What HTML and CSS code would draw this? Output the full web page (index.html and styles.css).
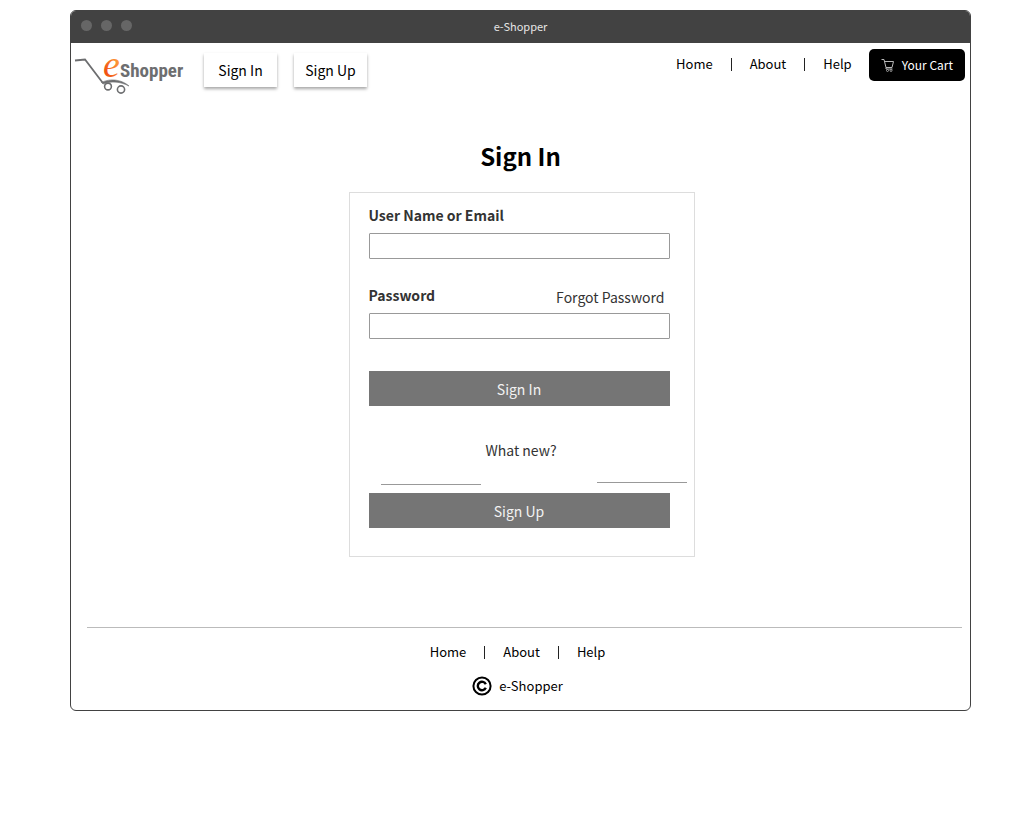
FILE: index.html
```html
<!DOCTYPE html>
<html lang="en">
<head>
<meta charset="utf-8">
<title>e-Shopper</title>
<link rel="stylesheet" href="styles.css">
</head>
<body>
<div class="window">
  <div class="titlebar">
    <div class="dots"><span class="dot"></span><span class="dot"></span><span class="dot"></span></div>
    <span class="titlebar-name">e-Shopper</span>
  </div>
  <header class="header">
    <svg class="logo" viewBox="0 -9 112 53" role="img" aria-label="eShopper">
      <defs>
        <linearGradient id="flame" x1="0" y1="1" x2="1" y2="0">
          <stop offset="0.2" stop-color="#f04e12"/>
          <stop offset="0.8" stop-color="#ffa340"/>
        </linearGradient>
      </defs>
      <path d="M1 8.500 11 7.500 28.500 30.500" fill="none" stroke="#6d6e70" stroke-width="1.800"/>
      <path d="M27.500 30.500C36 26 48 27.500 55 34 46 29.500 38 29 29 32Z" fill="#6d6e70" stroke="#6d6e70" stroke-width=".6"/>
      <circle cx="34" cy="34.500" r="3.400" fill="#fff" stroke="#6d6e70" stroke-width="1.600"/>
      <circle cx="47" cy="37.500" r="3.600" fill="#fff" stroke="#6d6e70" stroke-width="1.600"/>
      <text class="logo-e" x="29" y="25" fill="url(#flame)">e</text>
      <text class="logo-word" x="46" y="25">Shopper</text>
    </svg>
    <div class="account">
      <button class="tab" type="button">Sign In</button>
      <button class="tab" type="button">Sign Up</button>
    </div>
    <nav class="nav nav-top" aria-label="Main">
      <a href="#">Home</a><span class="bar"></span><a href="#">About</a><span class="bar"></span><a href="#">Help</a>
    </nav>
    <button class="cart" type="button">
      <svg class="cart-icon" viewBox="0 0 14 14" aria-hidden="true">
        <path d="M.5 1.500H3L5 9.500H11L12.500 3.500H3.500M5 9.500V11H11.500" fill="none" stroke="#b8b8b8"/>
        <circle cx="6.500" cy="12.500" r="1" fill="none" stroke="#b8b8b8" stroke-width=".8"/>
        <circle cx="10" cy="12.500" r="1" fill="none" stroke="#b8b8b8" stroke-width=".8"/>
      </svg>
      Your Cart
    </button>
  </header>
  <main class="main">
    <h1 class="heading">Sign In</h1>
    <form class="card">
      <div class="field">
        <label for="user">User Name or Email</label>
        <input id="user" type="text">
      </div>
      <div class="field">
        <div class="field-head">
          <label for="password">Password</label>
          <a class="forgot" href="#">Forgot Password</a>
        </div>
        <input id="password" type="password">
      </div>
      <button class="action" type="button">Sign In</button>
      <p class="question">What new?</p>
      <div class="rules"><span class="rule rule-left"></span><span class="rule rule-right"></span></div>
      <button class="action" type="button">Sign Up</button>
    </form>
  </main>
  <footer class="footer">
    <nav class="nav" aria-label="Footer">
      <a href="#">Home</a><span class="bar"></span><a href="#">About</a><span class="bar"></span><a href="#">Help</a>
    </nav>
    <p class="copyright">
      <svg class="copy-icon" viewBox="0 0 20 20" aria-hidden="true">
        <circle cx="10" cy="10" r="8.600" fill="none" stroke="#000" stroke-width="2"/>
        <path d="M13.800 8.200A4.200 4.200 0 1 0 13.800 11.800" fill="none" stroke="#000" stroke-width="2.400"/>
      </svg>
      e-Shopper
    </p>
  </footer>
</div>
</body>
</html>
```
FILE: styles.css
```css
* {
  box-sizing: border-box;
}

body {
  margin: 0;
  padding: 10px 50px 24px 70px;
  background: #fff;
  color: #000;
  font: 13px/20px "Noto Sans CJK JP", "Noto Sans CJK SC", sans-serif;
}

a {
  color: inherit;
  text-decoration: none;
}

button {
  margin: 0;
  border: 0;
  font: inherit;
  cursor: pointer;
}

.window {
  border: 1px solid #424242;
  border-radius: 6px;
  overflow: hidden;
}

.titlebar {
  display: grid;
  grid-template-columns: 1fr auto 1fr;
  align-items: center;
  height: 32px;
  padding: 0 10px 3px;
  background: #424242;
  color: #e6e6e6;
  font-size: 11px;
}

.dots {
  display: flex;
  gap: 9px;
}

.dot {
  width: 11px;
  height: 11px;
  border-radius: 50%;
  background: #666;
}

.header {
  display: flex;
  align-items: flex-start;
  padding: 0 5px 0 3px;
}

.logo {
  width: 112px;
  height: 53px;
}

.logo-e {
  font: italic 38px "Liberation Serif", serif;
}

.logo-word {
  fill: #6d6e70;
  font: bold 19px "Roboto Condensed", "Liberation Sans Narrow", "Noto Sans CJK JP", sans-serif;
}

.account {
  display: flex;
  gap: 17px;
  margin: 10px 0 0 18px;
}

.tab {
  width: 73px;
  height: 34px;
  padding: 0;
  background: #fff;
  color: #000;
  font-size: 14px;
  box-shadow: 0 2px 3px rgba(0, 0, 0, 0.35);
}

.nav {
  display: flex;
  justify-content: center;
  align-items: center;
  gap: 18px;
}

.nav-top {
  margin: 11px 17px 0 auto;
}

.bar {
  width: 1px;
  height: 13px;
  background: #222;
}

.cart {
  display: flex;
  align-items: center;
  gap: 7px;
  height: 32px;
  margin-top: 6px;
  padding: 0 12px;
  border-radius: 5px;
  background: #000;
  color: #fff;
  font-size: 12px;
}

.cart-icon {
  width: 14px;
  height: 14px;
}

.main {
  display: flex;
  flex-direction: column;
  align-items: center;
  padding: 40px 0 70px;
}

.heading {
  margin: 0 0 16px;
  font-size: 24px;
  line-height: 40px;
}

.card {
  width: 346px;
  max-width: 100%;
  margin-left: 2px;
  padding: 12px 24px 28px 19px;
  border: 1px solid #ddd;
  color: #333;
  font-size: 14px;
}

.field {
  margin-bottom: 26px;
}

.field label {
  display: block;
  height: 28px;
  font-weight: bold;
}

.field-head {
  display: flex;
  justify-content: space-between;
  padding-right: 5px;
}

.forgot {
  padding-top: 2px;
}

.field input {
  display: block;
  width: 100%;
  height: 26px;
  margin: 0;
  padding: 0 6px;
  border: 1px solid #999;
  border-radius: 1px;
  background: #fff;
  font: inherit;
}

.action {
  display: block;
  width: 100%;
  height: 35px;
  margin-top: 32px;
  background: #757575;
  color: #f2f2f2;
}

.question {
  margin: 34px 0 22px 4px;
  text-align: center;
}

.rules {
  display: flex;
  justify-content: space-between;
  height: 3px;
  margin: 0 -17px 0 12px;
}

.rule {
  border-bottom: 1px solid #999;
}

.rule-left {
  width: 100px;
}

.rule-right {
  width: 90px;
  height: 1px;
}

.rules + .action {
  margin-top: 8px;
}

.footer {
  margin: 0 8px 0 16px;
  padding: 14px 14px 14px 0;
  border-top: 1px solid #bbb;
}

.copyright {
  display: flex;
  justify-content: center;
  align-items: center;
  gap: 7px;
  margin: 14px 0 0;
}

.copy-icon {
  width: 20px;
  height: 20px;
}
```
